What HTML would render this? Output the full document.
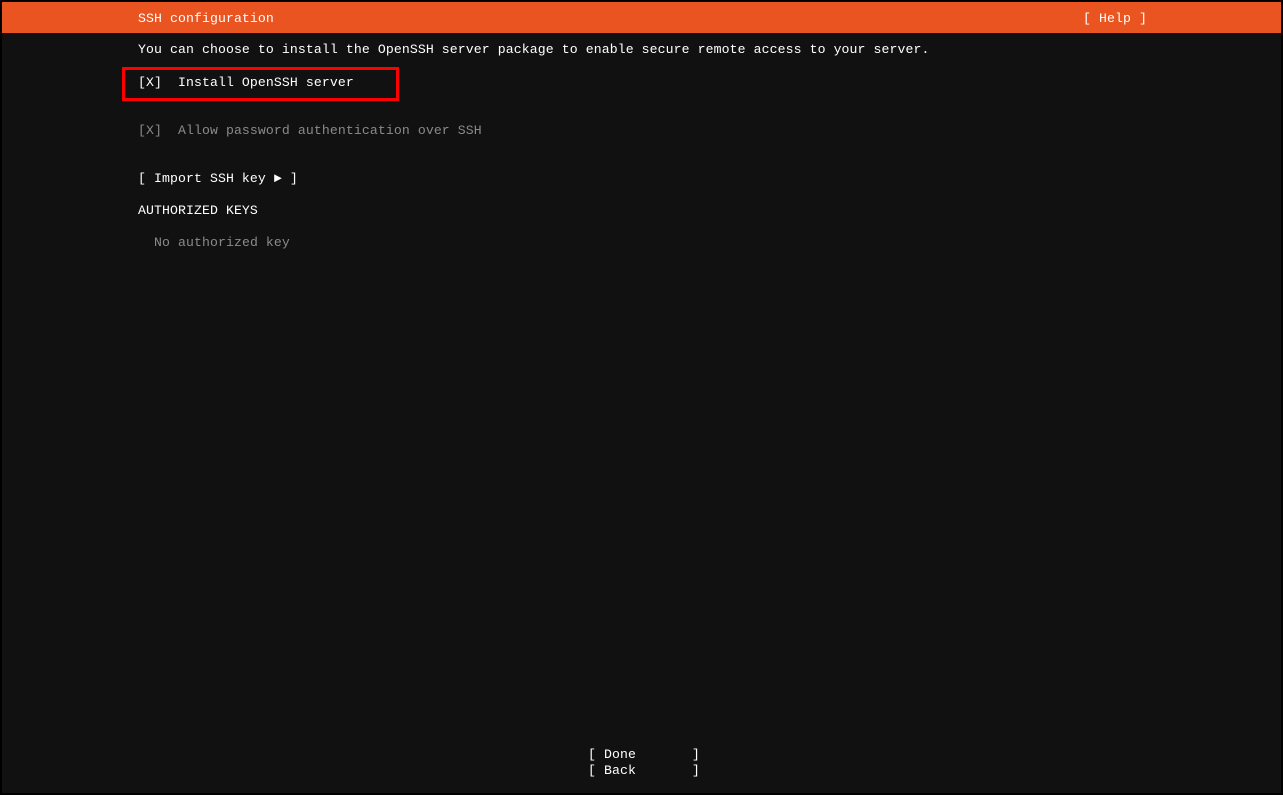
<!DOCTYPE html>
<html><head><meta charset="utf-8"><style>
html,body{margin:0;padding:0;}
body{width:1283px;height:795px;background:#000;position:relative;overflow:hidden;font-family:"Liberation Mono","DejaVu Sans Mono",monospace;font-size:13.17px;letter-spacing:0.1px;color:#fff;}
#scr{position:absolute;left:2px;top:2px;width:1279px;height:791px;background:#111;}
#hdr{position:absolute;left:2px;top:2px;width:1279px;height:31px;background:#e95420;}
.t{position:absolute;white-space:pre;line-height:16px;height:16px;}
.g{color:#8a8a8a;}
#box{position:absolute;left:122px;top:67px;width:271px;height:28px;border:3px solid #f00;}
</style></head><body>
<div id="scr"></div>
<div id="hdr"></div>
<div class="t" style="left:138px;top:11px">SSH configuration</div>
<div class="t" style="left:1083px;top:11px">[ Help ]</div>
<div class="t" style="left:138px;top:42px">You can choose to install the OpenSSH server package to enable secure remote access to your server.</div>
<div class="t" style="left:138px;top:75px">[X]  Install OpenSSH server</div>
<div id="box"></div>
<div class="t g" style="left:138px;top:123px">[X]  Allow password authentication over SSH</div>
<div class="t" style="left:138px;top:171px">[ Import SSH key ► ]</div>
<div class="t" style="left:138px;top:203px">AUTHORIZED KEYS</div>
<div class="t g" style="left:154px;top:235px">No authorized key</div>
<div class="t" style="left:588px;top:747px">[ Done       ]</div>
<div class="t" style="left:588px;top:763px">[ Back       ]</div>
</body></html>
